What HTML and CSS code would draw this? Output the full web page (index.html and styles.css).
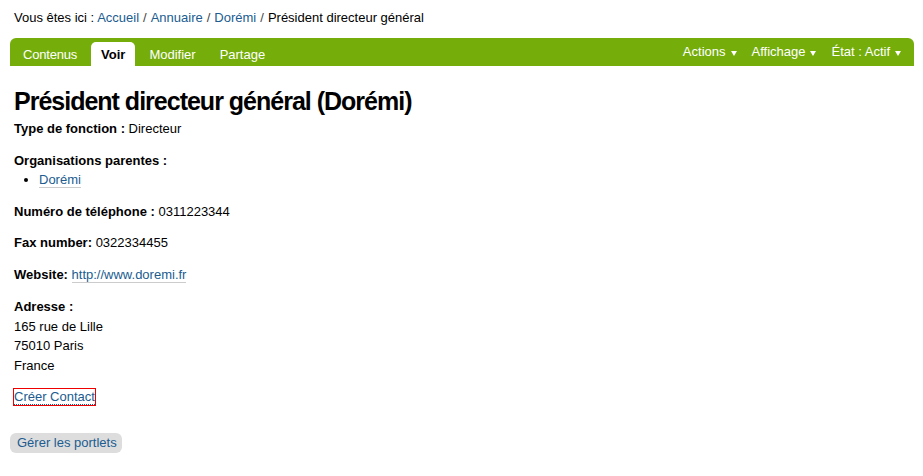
FILE: index.html
```html
<!DOCTYPE html>
<html lang="fr">
<head>
<meta charset="utf-8">
<title>Président directeur général (Dorémi)</title>
<link rel="stylesheet" href="styles.css">
</head>
<body>
<div class="page">
  <div class="breadcrumbs">
    <span>Vous êtes ici :</span>
    <a href="#">Accueil</a><span class="sep">/</span><a href="#">Annuaire</a><span class="sep">/</span><a href="#">Dorémi</a><span class="sep">/</span><span>Président directeur général</span>
  </div>
  <div class="editbar">
    <ul class="tabs">
      <li class="first"><a href="#">Contenus</a></li>
      <li class="selected"><a href="#">Voir</a></li>
      <li><a href="#">Modifier</a></li>
      <li><a href="#">Partage</a></li>
    </ul>
    <ul class="menus">
      <li><a href="#">Actions<span class="arrow"></span></a></li>
      <li><a href="#">Affichage<span class="arrow"></span></a></li>
      <li><a href="#">État : Actif<span class="arrow"></span></a></li>
    </ul>
  </div>
  <div class="content">
    <h1>Président directeur général (Dorémi)</h1>
    <p><b>Type de fonction :</b> Directeur</p>
    <div class="field">
      <b>Organisations parentes :</b>
      <ul class="list">
        <li><a class="link" href="#">Dorémi</a></li>
      </ul>
    </div>
    <p><b>Numéro de téléphone :</b> 0311223344</p>
    <p><b>Fax number:</b> 0322334455</p>
    <p class="web"><b>Website:</b> <a class="link" href="#">http://www.doremi.fr</a></p>
    <p><b>Adresse :</b><br>165 rue de Lille<br>75010 Paris<br>France</p>
    <p><a class="focus" href="#">Créer Contact</a></p>
  </div>
  <div class="manage">
    <a class="portlets" href="#">Gérer les portlets</a>
  </div>
</div>
</body>
</html>
```
FILE: styles.css
```css
html, body {
  margin: 0;
  padding: 0;
  background: #fff;
}
body {
  font-family: "Liberation Sans", Arial, sans-serif;
  font-size: 13px;
  line-height: 1.5;
  color: #000;
}
a {
  color: #205c90;
  text-decoration: none;
}
.page {
  padding: 0 9px 0 10px;
}
.breadcrumbs {
  padding: 8px 0 0 4px;
  height: 38px;
  box-sizing: border-box;
}
.breadcrumbs .sep {
  margin: 0 4px;
  color: #444;
}
.editbar {
  display: flex;
  justify-content: space-between;
  background: #75ad0a;
  border-radius: 6px 6px 0 0;
  height: 28px;
}
.tabs, .menus {
  list-style: none;
  margin: 0;
  padding: 0;
  display: flex;
  align-items: flex-end;
}
.tabs {
  padding-left: 3px;
  gap: 4px;
}
.tabs li a {
  display: block;
  color: #fff;
  padding: 0 10px;
  height: 24px;
  line-height: 25px;
  border-radius: 5px 5px 0 0;
}
.tabs li.first a {
  letter-spacing: -0.2px;
}
.tabs li.selected a {
  background: #fff;
  color: #000;
  font-weight: bold;
}
.menus {
  align-items: center;
  padding-right: 13px;
}
.menus li a {
  color: #fff;
  margin-left: 15px;
  display: flex;
  align-items: center;
  line-height: 28px;
}
.menus .arrow {
  width: 0;
  height: 0;
  border-left: 3px solid transparent;
  border-right: 3px solid transparent;
  border-top: 5px solid #fff;
  margin: 2px 0 0 5px;
}
.content {
  padding: 0 4px;
}
h1 {
  font-size: 25px;
  letter-spacing: -1px;
  line-height: 1.25;
  margin: 20px 0 2px;
}
p {
  margin: 0 0 12px;
}
p.web {
  margin-bottom: 13px;
}
.field {
  margin-bottom: 12px;
}
.list {
  margin: 0;
  padding-left: 25px;
  list-style: disc;
}
.link {
  border-bottom: 1px solid #ccc;
}
.focus {
  outline: 1px solid #e00;
  border-bottom: 1px dotted #205c90;
}
.manage {
  padding-top: 14px;
}
.portlets {
  display: inline-block;
  background: #ddd;
  border-radius: 6px;
  padding: 0 5px 0 7px;
  line-height: 20px;
}
```
